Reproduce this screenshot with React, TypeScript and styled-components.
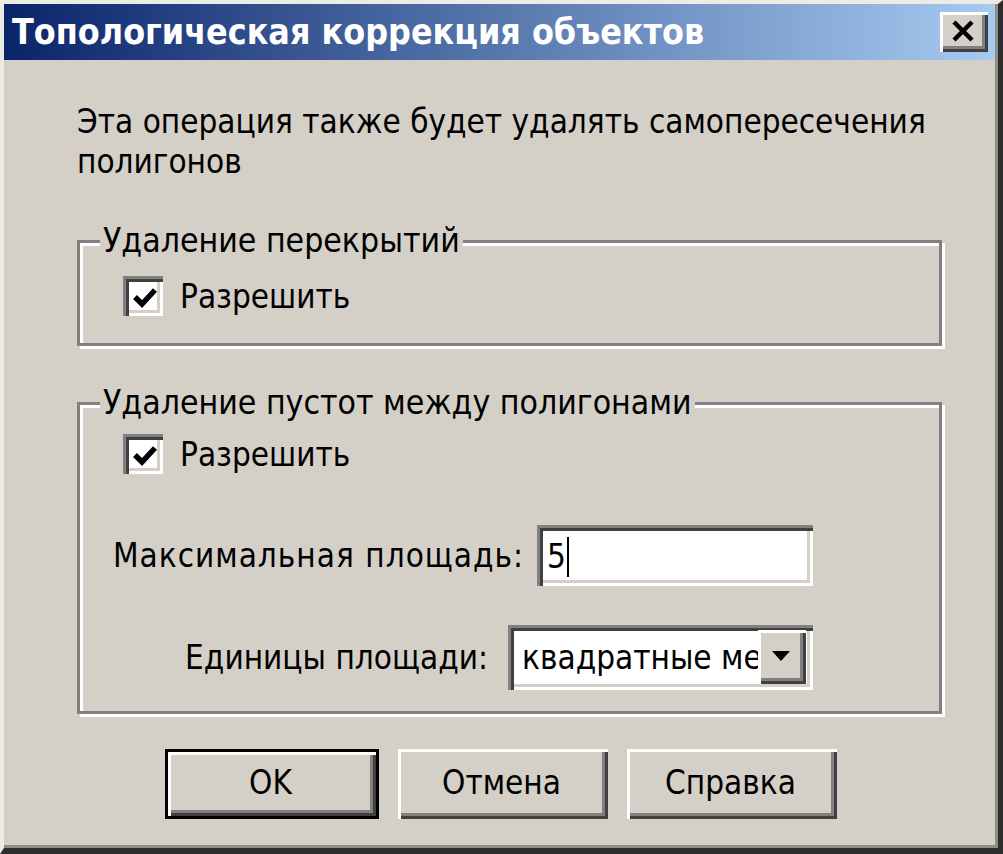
import React from 'react';
import styled, { createGlobalStyle } from 'styled-components';

const Global = createGlobalStyle`
  html, body { margin: 0; padding: 0; background: #d4d0c8; }
  #root { width: 1003px; height: 854px; }
  * { box-sizing: border-box; }
`;

const font = `'DejaVu Sans Condensed', 'DejaVu Sans', 'Liberation Sans', sans-serif`;

const Window = styled.div`
  width: 1003px;
  height: 854px;
  background: #d4d0c8;
  border-top: 4px solid #ecebe6;
  border-left: 4px solid #ecebe6;
  border-right: 5px solid #2c2c2c;
  border-bottom: 6px solid #2c2c2c;
  box-shadow: inset -3px -3px 0 #8e8c87;
  display: flex;
  flex-direction: column;
  font-family: ${font};
  font-stretch: condensed;
  color: #000;
`;

const TitleBar = styled.div`
  height: 56px;
  margin-right: 3px;
  display: flex;
  align-items: center;
  justify-content: space-between;
  padding: 0 7px 0 8px;
  background: linear-gradient(to right, #0a246a 0%, #a6caf0 100%);
`;

const TitleText = styled.span`
  color: #fff;
  font-weight: bold;
  font-size: 35.5px;
  line-height: 40px;
`;

const raised = `
  background: #d4d0c8;
  border: none;
  box-shadow: inset 3px 3px 0 #ffffff, inset -3px -3px 0 #404040, inset -6px -6px 0 #808080;
`;

const sunken = `
  background: #ffffff;
  box-shadow: inset 3px 3px 0 #808080, inset 6px 6px 0 #404040, inset -3px -3px 0 #ffffff, inset -6px -6px 0 #d4d0c8;
`;

const CloseButton = styled.div`
  ${raised}
  width: 48px;
  height: 40px;
  display: flex;
  align-items: center;
  justify-content: center;
  padding: 0 3px 3px 0;
`;

const Body = styled.div`
  flex: 1;
  display: flex;
  flex-direction: column;
  padding: 42px 56px 0 73px;
`;

const Description = styled.p`
  margin: 0;
  font-size: 33px;
  line-height: 40px;
`;

const Group = styled.fieldset<{ $top: number }>`
  margin: ${(p) => p.$top}px 0 0 0;
  padding: 0;
  min-width: 0;
  border: 3px solid #808080;
  box-shadow: 3px 3px 0 #ffffff, inset 3px 3px 0 #ffffff;
`;

const Legend = styled.legend`
  margin-left: 20px;
  padding: 0 3px;
  font-size: 33.5px;
  line-height: 40px;
  background: #d4d0c8;
`;

const GroupInner = styled.div<{ $pt: number; $pb: number }>`
  display: flex;
  flex-direction: column;
  padding: ${(p) => p.$pt}px 0 ${(p) => p.$pb}px 0;
`;

const CheckRow = styled.label`
  display: flex;
  align-items: center;
  height: 40px;
  margin-left: 43px;
  gap: 17px;
  font-size: 33px;
`;

const CheckBox = styled.span`
  ${sunken}
  width: 40px;
  height: 40px;
  display: flex;
  align-items: center;
  justify-content: center;
  padding: 4px 0 0 4px;
`;

const FieldRow = styled.div<{ $top: number; $gap: number }>`
  display: flex;
  align-items: center;
  justify-content: flex-end;
  margin-top: ${(p) => p.$top}px;
  padding-right: 126px;
  gap: ${(p) => p.$gap}px;
  font-size: 33px;
`;

const FieldLabel = styled.span<{ $spacing: number }>`
  letter-spacing: ${(p) => p.$spacing}px;
`;

const TextInput = styled.div`
  ${sunken}
  width: 276px;
  height: 61px;
  display: flex;
  align-items: center;
  padding: 2px 0 0 10px;
  font-size: 33px;
`;

const Caret = styled.span`
  display: inline-block;
  width: 2px;
  height: 40px;
  margin-left: 1px;
  background: #000;
`;

const Combo = styled.div`
  ${sunken}
  width: 305px;
  height: 65px;
  display: flex;
  align-items: stretch;
  padding: 5px 7px 6px 6px;
`;

const ComboText = styled.span`
  flex: 1;
  overflow: hidden;
  white-space: nowrap;
  display: flex;
  align-items: center;
  padding-left: 8px;
  font-size: 33px;
`;

const DropButton = styled.span`
  ${raised}
  width: 48px;
  flex: none;
  display: flex;
  align-items: center;
  justify-content: center;
  padding: 0 3px 3px 0;
`;

const Arrow = styled.span`
  width: 0;
  height: 0;
  border-left: 9px solid transparent;
  border-right: 9px solid transparent;
  border-top: 10px solid #000;
`;

const ButtonRow = styled.div`
  display: flex;
  justify-content: center;
  gap: 19px;
  margin: 35px -56px 0 -73px;
`;

const Button = styled.button<{ $default?: boolean; $w: number }>`
  ${raised}
  width: ${(p) => p.$w}px;
  height: 70px;
  font-family: ${font};
  font-stretch: condensed;
  font-size: 33px;
  color: #000;
  padding: 0 3px 3px 0;
  ${(p) =>
    p.$default
      ? `border: 3px solid #000; box-shadow: inset 3px 3px 0 #ffffff, inset -3px -3px 0 #404040, inset -6px -6px 0 #808080;`
      : ''}
`;

const Check = () => (
  <svg width="26" height="24" viewBox="0 0 26 24">
    <path d="M3 11 L10 18 L23 4" stroke="#000" strokeWidth="5.5" fill="none" />
  </svg>
);

export default function App() {
  return (
    <>
      <Global />
      <Window>
        <TitleBar>
          <TitleText>Топологическая коррекция объектов</TitleText>
          <CloseButton>
            <svg width="24" height="22" viewBox="0 0 24 22">
              <path d="M3 2 L21 20 M21 2 L3 20" stroke="#000" strokeWidth="4.5" />
            </svg>
          </CloseButton>
        </TitleBar>
        <Body>
          <Description>
            Эта операция также будет удалять самопересечения
            <br />
            полигонов
          </Description>
          <Group $top={39}>
            <Legend>Удаление перекрытий</Legend>
            <GroupInner $pt={15} $pb={27}>
              <CheckRow>
                <CheckBox>
                  <Check />
                </CheckBox>
                Разрешить
              </CheckRow>
            </GroupInner>
          </Group>
          <Group $top={37}>
            <Legend>Удаление пустот между полигонами</Legend>
            <GroupInner $pt={11} $pb={21}>
              <CheckRow>
                <CheckBox>
                  <Check />
                </CheckBox>
                Разрешить
              </CheckRow>
              <FieldRow $top={51} $gap={13}>
                <FieldLabel $spacing={1}>Максимальная площадь:</FieldLabel>
                <TextInput>
                  5<Caret />
                </TextInput>
              </FieldRow>
              <FieldRow $top={39} $gap={20}>
                <FieldLabel $spacing={0}>Единицы площади:</FieldLabel>
                <Combo>
                  <ComboText>квадратные метры</ComboText>
                  <DropButton>
                    <Arrow />
                  </DropButton>
                </Combo>
              </FieldRow>
            </GroupInner>
          </Group>
          <ButtonRow>
            <Button $default $w={214}>OK</Button>
            <Button $w={210}>Отмена</Button>
            <Button $w={210}>Справка</Button>
          </ButtonRow>
        </Body>
      </Window>
    </>
  );
}
